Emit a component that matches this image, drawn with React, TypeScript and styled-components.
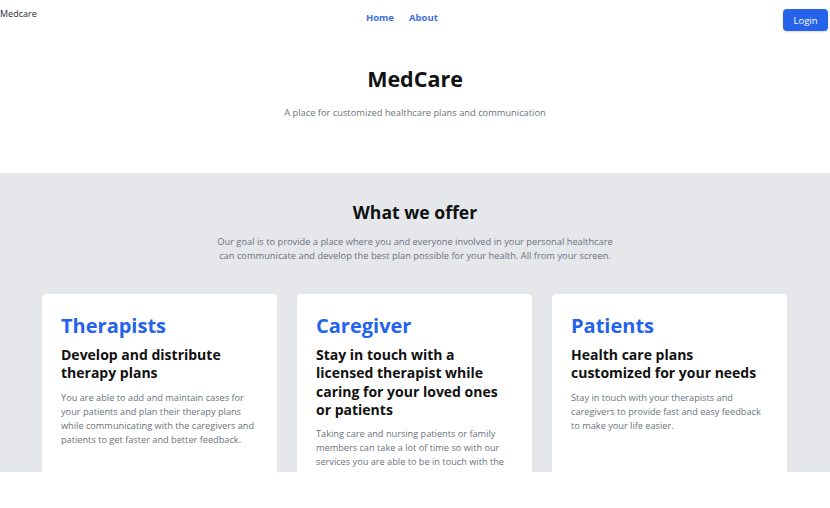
import React from "react";
import styled, { createGlobalStyle } from "styled-components";

const GlobalStyle = createGlobalStyle`
  html, body {
    margin: 0;
    padding: 0;
    background: #ffffff;
  }
  body {
    font-family: "Open Sans", "Noto Sans", sans-serif;
    color: #111827;
    overflow: hidden;
  }
`;

type Offer = {
  title: string;
  subtitle: string;
  text: string;
};

const offers: Offer[] = [
  {
    title: "Therapists",
    subtitle: "Develop and distribute therapy plans",
    text: "You are able to add and maintain cases for your patients and plan their therapy plans while communicating with the caregivers and patients to get faster and better feedback.",
  },
  {
    title: "Caregiver",
    subtitle: "Stay in touch with a licensed therapist while caring for your loved ones or patients",
    text: "Taking care and nursing patients or family members can take a lot of time so with our services you are able to be in touch with the therapists of your patients and get professional help.",
  },
  {
    title: "Patients",
    subtitle: "Health care plans customized for your needs",
    text: "Stay in touch with your therapists and caregivers to provide fast and easy feedback to make your life easier.",
  },
];

const App: React.FC = () => {
  return (
    <>
      <GlobalStyle />
      <Page>
        <Header>
          <Brand>Medcare</Brand>
          <Nav>
            <NavLink href="#">Home</NavLink>
            <NavLink href="#">About</NavLink>
          </Nav>
          <LoginButton>Login</LoginButton>
        </Header>

        <Hero>
          <HeroTitle>MedCare</HeroTitle>
          <HeroText>A place for customized healthcare plans and communication</HeroText>
        </Hero>

        <OfferSection>
          <SectionTitle>What we offer</SectionTitle>
          <SectionText>
            Our goal is to provide a place where you and everyone involved in your personal healthcare
            can communicate and develop the best plan possible for your health. All from your screen.
          </SectionText>
          <CardGrid>
            {offers.map((offer) => (
              <Card key={offer.title}>
                <CardTitle>{offer.title}</CardTitle>
                <CardSubtitle>{offer.subtitle}</CardSubtitle>
                <CardText>{offer.text}</CardText>
              </Card>
            ))}
          </CardGrid>
        </OfferSection>
      </Page>
    </>
  );
};

const Page = styled.div`
  width: 830px;
  height: 508px;
  overflow: hidden;
  background: #ffffff;
`;

const Header = styled.header`
  display: flex;
  justify-content: space-between;
  align-items: flex-start;
  padding: 0 2px 0 0;
  height: 40px;
`;

const Brand = styled.div`
  font-size: 9px;
  color: #1f2937;
  padding-top: 7px;
`;

const Nav = styled.nav`
  display: flex;
  gap: 15px;
  padding-top: 11px;
  margin-left: -16px;
`;

const NavLink = styled.a`
  font-size: 9.5px;
  font-weight: 700;
  color: #3b6fe0;
  text-decoration: none;
`;

const LoginButton = styled.button`
  margin-top: 9px;
  width: 45px;
  height: 22px;
  border: none;
  border-radius: 4px;
  background: #2563eb;
  color: #ffffff;
  font-family: "Open Sans", sans-serif;
  font-size: 9.5px;
  padding: 0;
  box-shadow: 0 1px 2px rgba(0, 0, 0, 0.15);
`;

const Hero = styled.section`
  display: flex;
  flex-direction: column;
  align-items: center;
  height: 133px;
  padding-top: 24px;
  box-sizing: border-box;
`;

const HeroTitle = styled.h1`
  margin: 0;
  font-size: 21.5px;
  font-weight: 700;
  color: #111111;
  line-height: 30px;
`;

const HeroText = styled.p`
  margin: 12px 0 0;
  font-size: 9.3px;
  color: #6b7280;
`;

const OfferSection = styled.section`
  height: 299px;
  overflow: hidden;
  background: #e5e7eb;
  display: flex;
  flex-direction: column;
  align-items: center;
  padding-top: 27px;
  box-sizing: border-box;
`;

const SectionTitle = styled.h2`
  margin: 0;
  font-size: 17.6px;
  font-weight: 700;
  color: #111111;
  line-height: 24px;
`;

const SectionText = styled.p`
  margin: 11px 0 0;
  width: 406px;
  font-size: 9.3px;
  line-height: 14px;
  color: #6b7280;
  text-align: center;
`;

const CardGrid = styled.div`
  display: grid;
  grid-template-columns: repeat(3, 235px);
  gap: 20px;
  margin-top: 31px;
  margin-left: -1px;
`;

const Card = styled.article`
  background: #ffffff;
  border-radius: 4px;
  padding: 20px 19px 30px 19px;
  min-height: 220px;
`;

const CardTitle = styled.h3`
  margin: 0;
  font-size: 20px;
  font-weight: 700;
  color: #2563eb;
  line-height: 24px;
`;

const CardSubtitle = styled.h4`
  margin: 8px 0 0;
  font-size: 14px;
  font-weight: 700;
  color: #111111;
  line-height: 18.3px;
`;

const CardText = styled.p`
  margin: 8px 0 0;
  font-size: 9.2px;
  line-height: 14px;
  color: #6b7280;
`;

export default App;
